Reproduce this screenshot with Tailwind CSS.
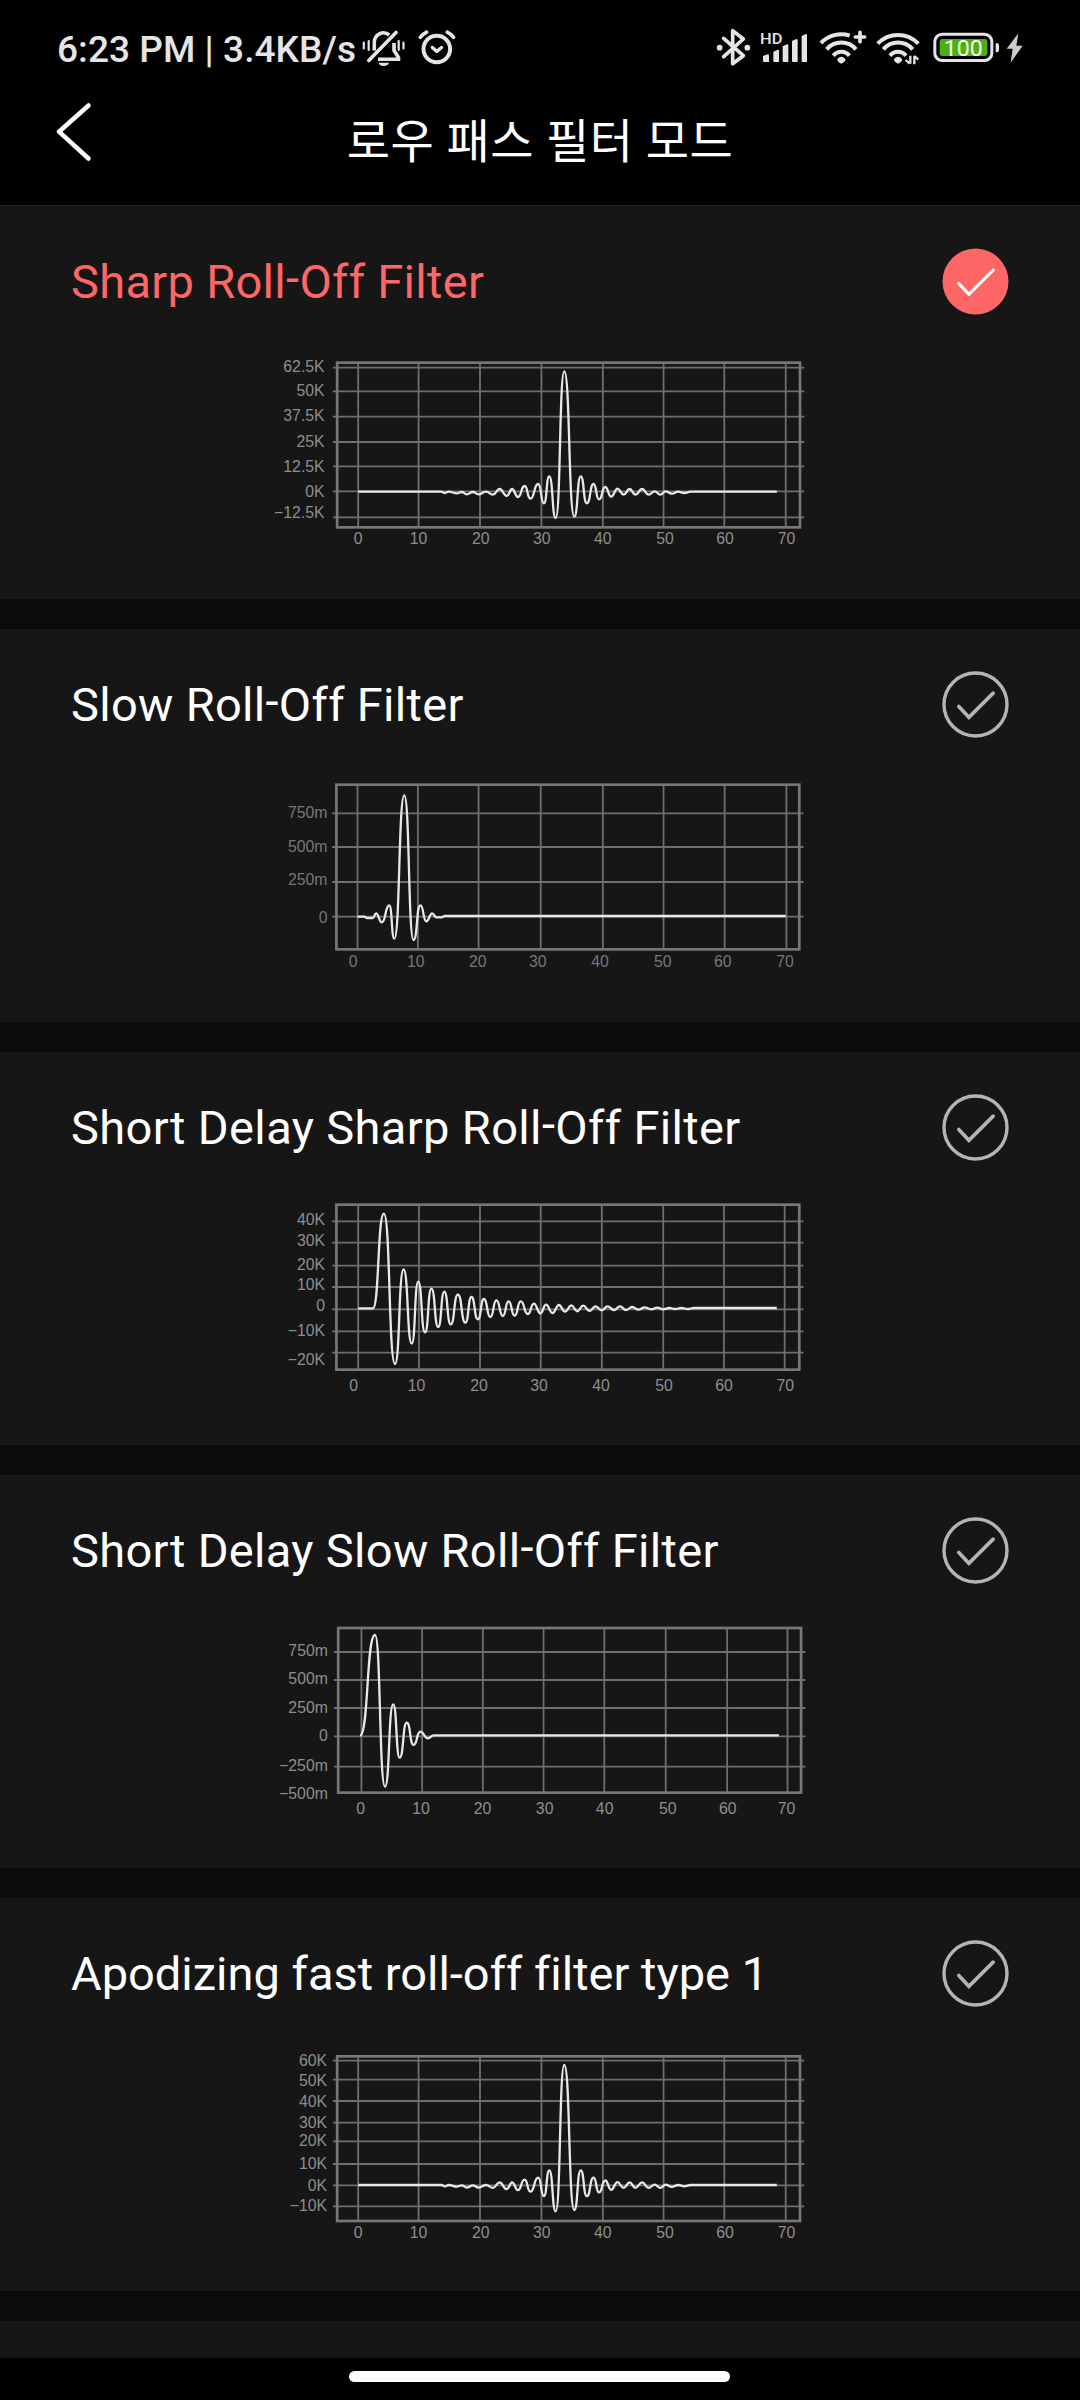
<!DOCTYPE html>
<html lang="ko">
<head>
<meta charset="utf-8">
<title>로우 패스 필터 모드</title>
<script src="https://cdn.jsdelivr.net/npm/@tailwindcss/browser@4"></script>
</head>
<body class="bg-black">
<div class="flex h-[2400px] w-[1080px] flex-col overflow-hidden bg-black font-['Roboto','Noto_Sans_CJK_KR',sans-serif]">
  <header class="flex h-[206px] shrink-0 flex-col border-b border-[#232323]">
    <div class="flex h-[80px] items-end justify-between pl-[57px] pr-[20px]">
      <div class="flex items-end text-[#e5e5e5]">
        <div id="clock" class="mb-[8px] h-[44px] w-[303px] whitespace-nowrap text-[37px] leading-[44px] tracking-[0.05px] font-medium">6:23 PM | 3.4KB/s</div>
        <svg class="h-[60px] w-[100px]" viewBox="360 20 100 60" fill="none" stroke="#e5e5e5" stroke-linecap="round">
          <path d="M374.3 50.500V42.500a9.200 9.500 0 0 1 15-7.500M394 43v7.500l4.500 7v1.800H378" stroke-width="3.600" stroke-linecap="butt"/>
          <path d="M396 32.500 368.800 60.500" stroke-width="3.600"/>
          <path d="M378.500 62.800h10.500a5.300 3.600 0 0 1-10.500 0z" fill="#e5e5e5" stroke="none"/>
          <path d="M363.800 42.500v6M368.700 41v9M398.700 41v9M403.500 42.500v6" stroke-width="2.200"/>
          <circle cx="436.800" cy="49" r="13.300" stroke-width="4"/>
          <path d="M432.300 47.500 436.800 51.500 441.500 47.500" stroke-width="3.400" stroke-linejoin="round"/>
          <path d="M420.300 37.300Q423 34 426.600 32.200M447.200 32.200Q451 34 453.600 37.300" stroke-width="3.600"/>
        </svg>
      </div>
      <svg class="h-[60px] w-[360px]" viewBox="0 0 1080 180" fill="none" stroke="#e5e5e5">
        <path d="M71 55 130 107 98 131V32L130 57 71 110" stroke-width="11" stroke-linecap="round" stroke-linejoin="round"/>
        <g fill="#e5e5e5" stroke="none">
          <circle cx="59" cy="83" r="8.500"/><circle cx="142" cy="83" r="8.500"/>
          <text x="180" y="72" font-size="46" font-weight="500" textLength="67" lengthAdjust="spacingAndGlyphs">HD</text>
          <path d="M189 108l14-5q4 0 4 4v19h-15q-3 0-3-3zM220 95l13-6q4 0 4 4v33h-14q-3 0-3-3zM248 79l13-6q4 0 4 4v49h-14q-3 0-3-3zM276 63l13-6q4 0 4 4v65h-14q-3 0-3-3zM305 48l12-6q4 0 4 4v80h-13q-3 0-3-3z"/>
          <path d="M412 117q12-13 24 0 2 4-3 8l-5 4q-4 3-8 0l-5-4q-5-4-3-8zM582 117q12-13 24 0 2 4-3 8l-5 4q-4 3-8 0l-5-4q-5-4-3-8z"/>
        </g>
        <g stroke-width="12">
          <path d="M363 69A84.500 84.500 0 0 1 449 46.500M380 88A58 58 0 0 1 468 88M400 107A31 31 0 0 1 448 107"/>
          <path d="M480 37v28M466 51h28" stroke-linecap="round" stroke-width="11"/>
          <path d="M533 71A84.500 84.500 0 0 1 655 71M550 88A58 58 0 0 1 638 88M570 107A31 31 0 0 1 618 107"/>
        </g>
        <path d="M631 107v24M617 120l12 11M643 133v-26M655 119l-12-11" stroke-width="7"/>
        <rect x="704.500" y="42.500" width="171" height="79" rx="22" stroke-width="9"/>
        <rect x="719" y="57" width="143" height="51" rx="9" fill="#4caf17" stroke="none"/>
        <text x="731" y="107" font-size="68" font-weight="400" textLength="117" lengthAdjust="spacingAndGlyphs" fill="#f1ffe6" stroke="none">100</text>
        <path d="M887 69q10 0 10 7v14q0 7-10 7z" fill="#e5e5e5" stroke="none"/>
        <path d="M955 40 920 86H938L932 128 968 77H949z" fill="#ccc" stroke="none"/>
      </svg>
    </div>
    <div class="flex h-[125px] items-start">
      <svg class="mt-[16px] ml-[50px] h-[70px] w-[50px] shrink-0" viewBox="50 96 50 70" fill="none" stroke="#fff" stroke-width="4.500" stroke-linecap="round" stroke-linejoin="round"><path d="M88.500 105.500 59 131.700 88.500 158.500"/></svg>
      <h1 class="mt-[28px] w-[880px] text-center text-[47px] leading-[68px] font-normal tracking-[0.5px] text-white">로우 패스 필터 모드</h1>
    </div>
  </header>
  <main id="list" class="flex h-[2152px] shrink-0 flex-col gap-[30px] overflow-hidden bg-[#0b0b0b]"></main>
  <footer class="flex h-[42px] shrink-0 items-start justify-center bg-black pt-[13px] pr-[2px]">
    <div class="h-[11px] w-[381px] rounded-full bg-white"></div>
  </footer>
</div>

<script>
// Plot units: 2.8 per px across, 3 per px down.
const KX = 2.8, KY = 3;
const X = v => (v / KX).toFixed(2), Y = v => (v / KY).toFixed(2);

const sinc = (top, low, base, s) => {
  const y = v => base + (v - 455) * s;
  return [[275, base], [508, base], [517, y(459)], [529, y(455)], [551, y(460)], [565, y(456)], [579, y(463)], [596, y(456)], [612, y(463)], [633, y(455)], [652, y(464)], [671, y(447)], [691, y(468)], [706, y(447)], [722, y(471)], [741, y(438)], [757, y(476)], [779, y(432)], [795, y(490)], [810, y(409)], [828, low], [852, top], [880, low - 4], [898, y(409)], [915, y(490)], [934, y(432)], [949, y(478)], [967, y(441)], [983, y(470)], [1001, y(446)], [1018, y(464)], [1035, y(447)], [1051, y(464)], [1070, y(447)], [1088, y(464)], [1105, y(454)], [1121, y(464)], [1136, y(454)], [1153, y(461)], [1171, y(455)], [1188, y(459)], [1206, base], [1447, base]];
};

const filters = [
  { name: 'Sharp Roll-Off Filter', on: true, ls: 0.31, top: 134, frame: [216, 68, 1512, 562], lx: 181, tone: '#8e8e8e',
    rows: [83, 154, 230, 306, 379, 454, 532], yl: [['62.5K', 80], ['50K', 153], ['37.5K', 227], ['25K', 305], ['12.5K', 379], ['0K', 455], ['−12.5K', 517]],
    cols: [275, 444, 616, 788, 960, 1130, 1300, 1472], xl: [275, 444, 618, 789, 960, 1134, 1302, 1474], xy: 597,
    pts: sinc(94, 534, 455, 1) },
  { name: 'Slow Roll-Off Filter', ls: 0.31, top: 131, frame: [214, 74, 1510, 568], lx: 189, tone: '#767676',
    rows: [160, 261, 366, 470], yl: [['750m', 157], ['500m', 259], ['250m', 360], ['0', 474]],
    cols: [273, 442, 612, 786, 960, 1130, 1301, 1474], xl: [261, 436, 610, 778, 952, 1128, 1296, 1470], xy: 605,
    pts: [[273, 470], [292, 470], [300, 474], [316, 474], [325, 460], [341, 487], [362, 436], [376, 536], [404, 106], [430, 540], [449, 436], [466, 484], [482, 460], [494, 472], [508, 472], [518, 468], [1472, 468]] },
  { name: 'Short Delay Sharp Roll-Off Filter', ls: 0.36, top: 128, frame: [214, 74, 1510, 569], lx: 182, tone: '#8e8e8e',
    rows: [124, 188, 257, 321, 388, 454, 518], yl: [['40K', 118], ['30K', 181], ['20K', 253], ['10K', 315], ['0', 378], ['−10K', 451], ['−20K', 539]],
    cols: [275, 445, 616, 786, 957, 1129, 1299, 1469], xl: [262, 438, 613, 781, 955, 1131, 1299, 1471], xy: 616,
    pts: [[275, 385], [316, 385], [347, 101], [378, 552], [402, 268], [425, 491], [443, 305], [462, 457], [480, 326], [499, 441], [516, 335], [534, 433], [554, 344], [575, 428], [592, 351], [610, 418], [627, 357], [645, 411], [662, 361], [680, 408], [696, 364], [713, 407], [730, 364], [750, 402], [767, 371], [785, 400], [801, 374], [819, 399], [837, 375], [854, 395], [872, 376], [888, 394], [905, 377], [923, 393], [939, 379], [957, 391], [973, 379], [991, 390], [1008, 379], [1025, 390], [1042, 381], [1060, 389], [1077, 382], [1095, 388], [1113, 383], [1129, 388], [1146, 384], [1163, 387], [1180, 384], [1198, 387], [1215, 384], [1447, 384]] },
  { name: 'Short Delay Slow Roll-Off Filter', ls: 0.32, top: 130, frame: [219, 69, 1515, 563], lx: 190, tone: '#8e8e8e',
    rows: [141, 225, 309, 394, 485], yl: [['750m', 138], ['500m', 222], ['250m', 309], ['0', 393], ['−250m', 482], ['−500m', 567]],
    cols: [284, 454, 624, 794, 964, 1136, 1308, 1477], xl: [282, 451, 623, 797, 965, 1142, 1310, 1474], xy: 611,
    pts: [[280, 392], [322, 90], [350, 545], [373, 298], [391, 458], [411, 353], [430, 420], [449, 380], [470, 400], [486, 391], [1453, 391]] },
  { name: 'Apodizing fast roll-off filter type 1', ls: 0, top: 132, frame: [216, 79, 1512, 573], lx: 188, tone: '#8e8e8e',
    rows: [92, 149, 213, 278, 334, 402, 466, 529], yl: [['60K', 91], ['50K', 153], ['40K', 215], ['30K', 277], ['20K', 333], ['10K', 402], ['0K', 466], ['−10K', 528]],
    cols: [275, 444, 616, 788, 960, 1130, 1300, 1472], xl: [275, 444, 618, 789, 960, 1134, 1302, 1474], xy: 608,
    pts: sinc(105, 544, 465, 0.96) },
];

function curve(p) {
  let d = `M${X(p[0][0])} ${Y(p[0][1])}`;
  for (let i = 1; i < p.length; i++) {
    const [x0, y0] = p[i - 1], [x1, y1] = p[i], h = (x1 - x0) * (Math.abs(y1 - y0) > 30 ? 0.58 : 0.45);
    d += `C${X(x0 + h)} ${Y(y0)} ${X(x1 - h)} ${Y(y1)} ${X(x1)} ${Y(y1)}`;
  }
  return d;
}

function chart(f) {
  const [l, t, r, b] = f.frame;
  const grid = f.rows.map(y => `M${X(l - 12)} ${Y(y)}H${X(r + 12)}`).join('') + f.cols.map(x => `M${X(x)} ${Y(t)}V${Y(b)}`).join('');
  return `<svg class="ml-[260px] h-[265px] w-[560px]" viewBox="0 0 560 265" fill="none">
    <g transform="translate(0 ${f.top - 128})">
      <path d="${grid}" stroke="#6e6e6e" stroke-width="1.8"/>
      <rect x="${X(l)}" y="${Y(t)}" width="${X(r - l)}" height="${Y(b - t)}" stroke="#777" stroke-width="2.7"/>
      <path d="${curve(f.pts)}" stroke="#e8e8e8" stroke-width="2.3"/>
      <g fill="${f.tone}" font-size="15.8" font-family="Liberation Sans, Arial, sans-serif">
        <g text-anchor="end">${f.yl.map(([s, y]) => `<text x="${X(f.lx)}" y="${Y(y + 16)}">${s}</text>`).join('')}</g>
        <g text-anchor="middle">${f.xl.map((x, i) => `<text x="${X(x)}" y="${Y(f.xy + 16)}">${i * 10}</text>`).join('')}</g>
      </g>
    </g>
  </svg>`;
}

// The hyphen between capitals sits at mid cap height.
const title = s => s.replace('l-O', 'l<span class="relative -top-[4px]">-</span>O');

document.getElementById('list').innerHTML = filters.map(f => `
  <section class="flex h-[393px] shrink-0 flex-col bg-[#161616]">
    <div class="flex h-[128px] shrink-0 items-start justify-between pl-[71px] pr-[70px]">
      <h2 class="mt-[46px] text-[47px] leading-[60px] whitespace-nowrap [font-variant-ligatures:none] ${f.on ? 'text-[#ff6666]' : 'text-white'}" style="letter-spacing:${f.ls}px">${title(f.name)}</h2>
      <svg class="mt-[40px] h-[70px] w-[70px]" viewBox="-35.500 -35.500 70 70" fill="none">
        ${f.on ? '<circle r="33" fill="#ff6666"/>' : '<circle r="31.500" stroke="#b4b4b4" stroke-width="3.400"/>'}
        <path d="M-16.700 2 -6.600 12.800 17.700 -11.400" stroke="${f.on ? '#fff' : '#b4b4b4'}" stroke-width="${f.on ? 3.1 : 3.6}" stroke-linecap="round"/>
      </svg>
    </div>
    ${chart(f)}
  </section>`).join('') + '<section class="h-[37px] shrink-0 bg-[#161616]"></section>';
</script>
</body>
</html>
